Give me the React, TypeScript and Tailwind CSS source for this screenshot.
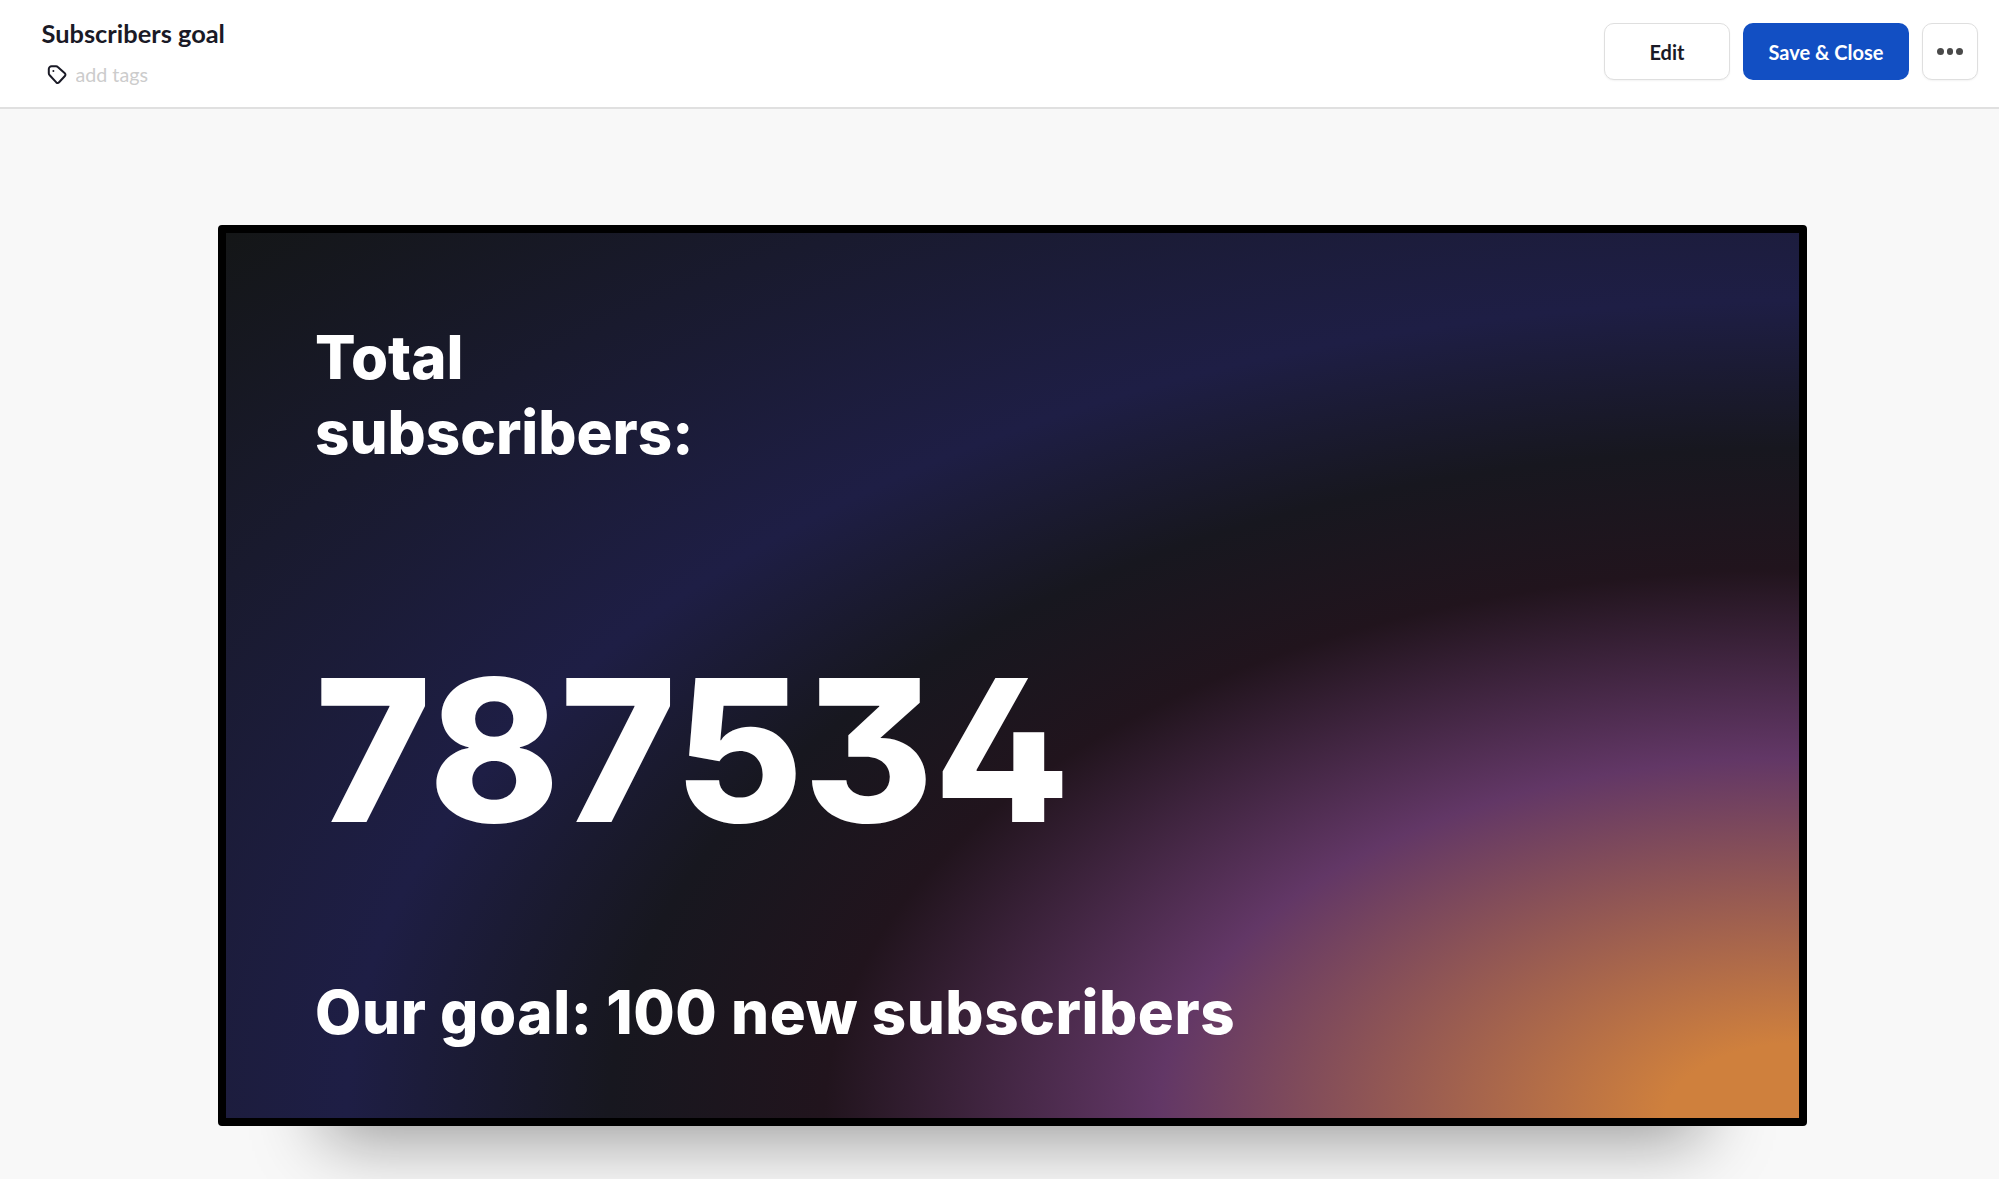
import React, { useState } from 'react';

interface SlideProps {
  label: string;
  value: number;
  goal: string;
}

const TagIcon: React.FC<{ className?: string }> = ({ className = '' }) => (
  <svg viewBox="0 0 20 20" fill="none" className={className} aria-hidden="true">
    <path
      d="M1.8 8.2V4a2.7 2.7 0 0 1 2.7-2.7h4.6a2.5 2.5 0 0 1 1.7.7l7 6.3a1.9 1.9 0 0 1 .1 2.7l-5.8 6.3a2 2 0 0 1-2.8.1L2.7 10.2a2.8 2.8 0 0 1-.9-2z"
      stroke="currentColor"
      strokeWidth="2"
      strokeLinejoin="round"
    />
    <circle cx="6.4" cy="6" r="1" fill="currentColor" />
  </svg>
);

const Header: React.FC<{ title: string }> = ({ title }) => {
  const [tags, setTags] = useState('');

  return (
    <header className="flex h-[109px] shrink-0 items-start justify-between border-b-2 border-[#e0e0e0] bg-white pl-[41.5px] pr-[21px]">
      <div className="pt-[18px]">
        <h1 className="text-[25.4px] leading-[31px] font-bold text-[#1a1a26]">{title}</h1>
        <label className="mt-[10px] flex items-center gap-[9px] pl-[5px]">
          <TagIcon className="h-5 w-5 text-[#1a1a26]" />
          <input
            value={tags}
            onChange={e => setTags(e.target.value)}
            placeholder="add tags"
            className="w-40 text-[19.7px] leading-[31px] outline-none placeholder:text-[#cccccc]"
          />
        </label>
      </div>

      <div className="flex gap-[13px] pt-[23px] text-[20px] font-bold">
        <button className="h-[57px] w-[126px] rounded-[10px] border-[1.5px] border-[#dfdfdf] bg-white text-[#1a1a26] shadow-xs">
          Edit
        </button>
        <button className="h-[57px] w-[166px] rounded-[10px] bg-[#124fc3] text-white">
          Save &amp; Close
        </button>
        <button
          aria-label="More"
          className="flex h-[57px] w-[56px] items-center justify-center gap-[3px] rounded-[10px] border-[1.5px] border-[#dfdfdf] bg-white shadow-xs"
        >
          <span className="h-[6.5px] w-[6.5px] rounded-full bg-[#4a4a4a]" />
          <span className="h-[6.5px] w-[6.5px] rounded-full bg-[#4a4a4a]" />
          <span className="h-[6.5px] w-[6.5px] rounded-full bg-[#4a4a4a]" />
        </button>
      </div>
    </header>
  );
};

const Slide: React.FC<SlideProps> = ({ label, value, goal }) => (
  <section className="h-[901px] w-[1589px] rounded-[4px] border-8 border-black bg-[radial-gradient(ellipse_farthest-corner_at_100%_100%,#cf803d_6%,#623766_28.8%,#21141d_43.8%,#17171f_53.5%,#1e1e45_65.3%,#141617_100%)] pl-[89px] font-['Inter',sans-serif] font-extrabold text-white shadow-[0_120px_66px_-106px_rgba(0,0,0,0.38)]">
    <p className="w-[480px] pt-[87px] text-[60px] leading-[75px]">{label}</p>
    <p className="mt-[160px] text-[198px] leading-[240px] [font-feature-settings:'cv02','cv09']">{value}</p>
    <p className="mt-[105px] text-[60px] leading-[75px] tracking-[0.57px]">{goal}</p>
  </section>
);

export default function App() {
  return (
    <div className="flex h-[1179px] flex-col overflow-hidden bg-[#f8f8f8] font-['Lato',sans-serif]">
      <Header title="Subscribers goal" />
      <main className="pt-[116px] pl-[218px]">
        <Slide label="Total subscribers:" value={787534} goal="Our goal: 100 new subscribers" />
      </main>
    </div>
  );
}
